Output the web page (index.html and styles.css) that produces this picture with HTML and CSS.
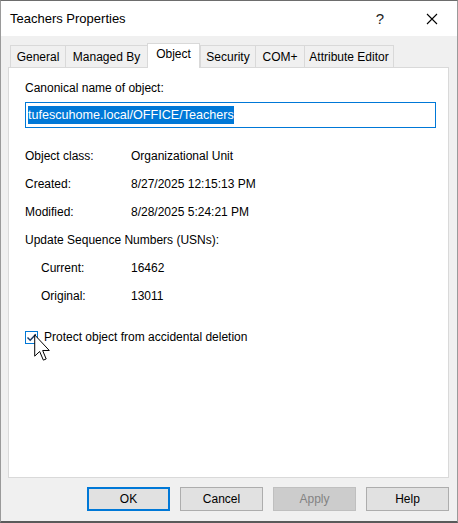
FILE: index.html
```html
<!DOCTYPE html>
<html lang="en">
<head>
  <meta charset="UTF-8">
  <title>Teachers Properties</title>
  <link rel="stylesheet" href="styles.css">
</head>
<body>
  <div class="window">
    <div class="titlebar">
      <span class="title">Teachers Properties</span>
      <span class="help-btn">?</span>
      <span class="close-btn">
        <svg width="12" height="12" viewBox="0 0 12 12">
          <path d="M1 1 L11 11 M11 1 L1 11" stroke="#000" stroke-width="1.1" fill="none"/>
        </svg>
      </span>
    </div>

    <div class="dialog">
      <div class="tabs">
        <div class="tab t-general">General</div>
        <div class="tab t-managed">Managed By</div>
        <div class="tab active">Object</div>
        <div class="tab t-security">Security</div>
        <div class="tab t-com">COM+</div>
        <div class="tab t-attr">Attribute Editor</div>
      </div>

      <div class="panel">
        <div class="label">Canonical name of object:</div>
        <div class="textbox"><span class="selected">tufescuhome.local/OFFICE/Teachers</span></div>

        <div class="props">
          <div>Object class:</div><div>Organizational Unit</div>
          <div>Created:</div><div>8/27/2025 12:15:13 PM</div>
          <div>Modified:</div><div>8/28/2025 5:24:21 PM</div>
          <div class="span2">Update Sequence Numbers (USNs):</div>
          <div class="indent">Current:</div><div>16462</div>
          <div class="indent">Original:</div><div>13011</div>
        </div>

        <label class="check">
          <span class="box">
            <svg width="11" height="11" viewBox="0 0 11 11">
              <path d="M1.5 5.5 L4.2 8.3 L9.8 2.2" stroke="#1a3a66" stroke-width="1.4" fill="none"/>
            </svg>
          </span>
          Protect object from accidental deletion
          <svg class="cursor" width="17" height="28" viewBox="0 0 12 19.5">
            <path d="M0.5 0.5 L0.5 15.5 L4 12.2 L6.6 18.3 L8.6 17.5 L6.1 11.5 L10.8 11.5 Z" fill="#fff" stroke="#000" stroke-width="0.7" stroke-linejoin="miter"/>
          </svg>
        </label>
      </div>

      <div class="buttons">
        <button class="default">OK</button>
        <button>Cancel</button>
        <button disabled>Apply</button>
        <button>Help</button>
      </div>
    </div>
  </div>
</body>
</html>
```

FILE: styles.css
```css
body {
  margin: 0;
  font-family: "Liberation Sans", Arial, sans-serif;
  font-size: 12px;
  color: #000;
}

.window {
  width: 458px;
  height: 523px;
  box-sizing: border-box;
  border: 1px solid #9a9a9a;
  border-top-color: #6d6d6d;
  border-bottom: 2px solid #5a5a5a;
  background: #f0f0f0;
  display: flex;
  flex-direction: column;
}

.titlebar {
  height: 35px;
  background: #fff;
  display: flex;
  align-items: center;
  padding-left: 9px;
}

.title {
  font-size: 13px;
  flex: 1;
}

.help-btn {
  font-size: 15px;
  margin-right: 42px;
  color: #222;
}

.close-btn {
  display: flex;
  margin-right: 19px;
}

.dialog {
  flex: 1;
  padding: 9px 8px 0 7px;
}

.tabs {
  display: flex;
  padding-left: 2px;
  height: 22px;
  align-items: flex-end;
}

.tab {
  box-sizing: border-box;
  height: 22px;
  padding-top: 4px;
  white-space: nowrap;
  text-align: center;
  border: 1px solid #d9d9d9;
  border-bottom: none;
  margin-right: -1px;
  background: #f0f0f0;
}

.t-general { width: 56px; }
.t-managed { width: 83px; }
.t-security { width: 56px; }
.t-com { width: 50px; }
.t-attr { width: 90px; }

.tab.active {
  position: relative;
  z-index: 1;
  width: 53px;
  height: 25px;
  padding-top: 3px;
  margin: 0 0 -1px 0;
  background: #fff;
}

.panel {
  height: 411px;
  box-sizing: border-box;
  background: #fff;
  border: 1px solid #d9d9d9;
  padding: 13px 12px 0 16px;
}

.label {
  line-height: 15px;
}

.textbox {
  margin-top: 6px;
  height: 26px;
  box-sizing: border-box;
  border: 1px solid #0078d7;
  padding: 3px 2px;
  font-size: 12.6px;
}

.selected {
  display: inline-block;
  background: #0078d7;
  color: #fff;
  line-height: 18px;
}

.props {
  display: grid;
  grid-template-columns: 106px 1fr;
  grid-auto-rows: 28px;
  align-items: center;
  margin-top: 14px;
}

.props .span2 {
  grid-column: 1 / 3;
}

.props .indent {
  padding-left: 16px;
}

.check {
  position: relative;
  display: flex;
  align-items: center;
  gap: 6px;
  margin-top: 20px;
  line-height: 15px;
}

.box {
  width: 13px;
  height: 13px;
  box-sizing: border-box;
  border: 1px solid #0078d7;
  display: flex;
  align-items: center;
  justify-content: center;
}

.cursor {
  position: absolute;
  left: 9px;
  top: 4px;
}

.buttons {
  display: flex;
  justify-content: flex-end;
  gap: 10px;
  margin-top: 9px;
}

button {
  width: 83px;
  height: 24px;
  font-family: "Liberation Sans", Arial, sans-serif;
  font-size: 12px;
  color: #000;
  background: #e1e1e1;
  border: 1px solid #adadad;
  padding: 0;
}

button.default {
  border: 2px solid #0078d7;
}

button:disabled {
  background: #cccccc;
  border-color: #bfbfbf;
  color: #838383;
}
```
